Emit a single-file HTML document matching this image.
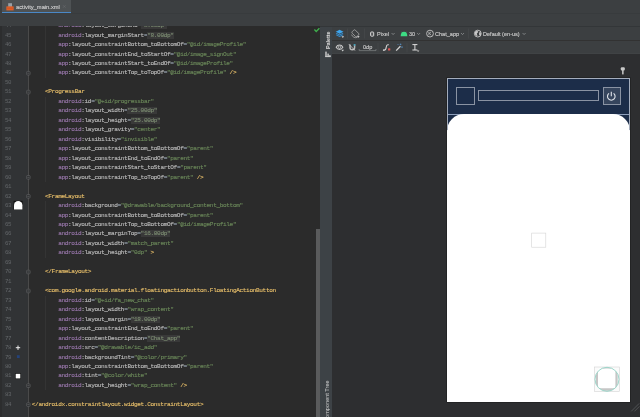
<!DOCTYPE html>
<html><head><meta charset="utf-8">
<style>
html,body{margin:0;padding:0;}
body{width:640px;height:417px;overflow:hidden;background:#2b2b2b;position:relative;font-family:"Liberation Sans",sans-serif;}
.abs{position:absolute;}
#topbar{left:0;top:0;width:640px;height:26px;background:#3c3f41;}
#tab{left:2px;top:0;width:69px;height:13px;background:#4e5254;}
#tabline{left:2px;top:11.7px;width:69px;height:1.6px;background:#4a88c7;}
#tabtxt{will-change:transform;left:16px;top:3px;font-size:5.77px;line-height:8px;color:#d6d6d6;-webkit-text-stroke:0.1px #d6d6d6;white-space:nowrap;}
#tabx{left:62px;top:2px;font-size:6px;line-height:8px;color:#7a7d7f;}
#editor{left:0;top:26px;width:320px;height:391px;background:#2b2b2b;overflow:hidden;}
#gutter{left:0;top:26px;width:28px;height:391px;background:#313335;}
#gutline{left:28.1px;top:26px;width:0.6px;height:391px;background:#4a4a4a;}
#code{will-change:transform;left:0;top:0;width:320px;height:417px;overflow:hidden;}
.ln{position:absolute;left:2.3px;width:9px;text-align:right;font-family:"Liberation Mono",monospace;font-size:5.8px;letter-spacing:-0.3px;line-height:9.47px;height:9.47px;color:#636669;white-space:pre;}
.cl{position:absolute;font-family:"Liberation Mono",monospace;font-size:6.1px;letter-spacing:-0.36px;-webkit-text-stroke:0.13px currentColor;line-height:9.47px;height:9.47px;white-space:pre;color:#a9b7c6;}
.ig{position:absolute;left:45.1px;width:0.6px;background:#343434;}
.ns{color:#9876aa}.at{color:#bababa}.eq{color:#a9b7c6}.v{color:#6a8759}.vh{color:#7a8a70;background:#393939}.tg{color:#e8bf6a}
#scroll{left:316px;top:229px;width:4px;height:188px;background:#5a5b5c;}
#strip{left:320px;top:26px;width:12px;height:391px;background:#3d4246;}
#tb{left:332px;top:26px;width:308px;height:28.2px;background:#3c3f41;}
#tbsep{left:332px;top:40.3px;width:308px;height:0.7px;background:#323232;}
#surface{left:332px;top:54.2px;width:308px;height:362.8px;background:#2d2e30;}
.tt{position:absolute;will-change:transform;font-size:5.55px;line-height:8px;color:#cdcdcd;-webkit-text-stroke:0.12px #cdcdcd;white-space:nowrap;}
.vt{position:absolute;font-size:5.6px;line-height:8px;color:#bbbbbb;white-space:nowrap;transform-origin:0 0;transform:rotate(-90deg);}
#phone{left:446.8px;top:78px;width:183.2px;height:324px;background:#1c2d49;box-sizing:border-box;box-shadow:0 0 0 0.6px #1e1e1f;}
#phoneborder{left:446.8px;top:78px;width:183.2px;height:52px;box-sizing:border-box;border:0.8px solid #a4adbd;border-bottom:none;}
#white{left:446.8px;top:114px;width:183.2px;height:288px;background:#ffffff;border-radius:17px 17px 0 0;}
#hline{left:447px;top:114px;width:183px;height:0.6px;background:#8fa0bc;}
.box{position:absolute;box-sizing:border-box;border:0.9px solid #8a93a3;}
</style></head><body>
<div id="editor" class="abs"></div>
<div id="gutter" class="abs"></div>
<div id="gutline" class="abs"></div>
<div class="abs" style="left:0;top:26px;width:2px;height:391px;background:#2c2d2e;"></div>
<div id="code" class="abs">
<div class="ln" style="top:21.09px">44</div>
<div class="cl" style="top:21.09px;left:58.20px"><span class="ns">android</span><span class="at">:layout_marginEnd</span><span class="eq">=</span><span class="vh">&quot;8.00dp&quot;</span></div>
<div class="ln" style="top:30.56px">45</div>
<div class="cl" style="top:30.56px;left:58.20px"><span class="ns">android</span><span class="at">:layout_marginStart</span><span class="eq">=</span><span class="vh">&quot;8.00dp&quot;</span></div>
<div class="ln" style="top:40.03px">46</div>
<div class="cl" style="top:40.03px;left:58.20px"><span class="ns">app</span><span class="at">:layout_constraintBottom_toBottomOf</span><span class="eq">=</span><span class="v">&quot;@id/imageProfile&quot;</span></div>
<div class="ln" style="top:49.50px">47</div>
<div class="cl" style="top:49.50px;left:58.20px"><span class="ns">app</span><span class="at">:layout_constraintEnd_toStartOf</span><span class="eq">=</span><span class="v">&quot;@id/image_signOut&quot;</span></div>
<div class="ln" style="top:58.98px">48</div>
<div class="cl" style="top:58.98px;left:58.20px"><span class="ns">app</span><span class="at">:layout_constraintStart_toEndOf</span><span class="eq">=</span><span class="v">&quot;@id/imageProfile&quot;</span></div>
<div class="ln" style="top:68.45px">49</div>
<div class="cl" style="top:68.45px;left:58.20px"><span class="ns">app</span><span class="at">:layout_constraintTop_toTopOf</span><span class="eq">=</span><span class="v">&quot;@id/imageProfile&quot;</span><span class="tg"> /&gt;</span></div>
<div class="ln" style="top:77.92px">50</div>
<div class="ln" style="top:87.39px">51</div>
<div class="cl" style="top:87.39px;left:45.00px"><span class="tg">&lt;ProgressBar</span></div>
<div class="ln" style="top:96.86px">52</div>
<div class="cl" style="top:96.86px;left:58.20px"><span class="ns">android</span><span class="at">:id</span><span class="eq">=</span><span class="v">&quot;@+id/progressbar&quot;</span></div>
<div class="ln" style="top:106.33px">53</div>
<div class="cl" style="top:106.33px;left:58.20px"><span class="ns">android</span><span class="at">:layout_width</span><span class="eq">=</span><span class="vh">&quot;25.00dp&quot;</span></div>
<div class="ln" style="top:115.80px">54</div>
<div class="cl" style="top:115.80px;left:58.20px"><span class="ns">android</span><span class="at">:layout_height</span><span class="eq">=</span><span class="vh">&quot;25.00dp&quot;</span></div>
<div class="ln" style="top:125.27px">55</div>
<div class="cl" style="top:125.27px;left:58.20px"><span class="ns">android</span><span class="at">:layout_gravity</span><span class="eq">=</span><span class="v">&quot;center&quot;</span></div>
<div class="ln" style="top:134.73px">56</div>
<div class="cl" style="top:134.73px;left:58.20px"><span class="ns">android</span><span class="at">:visibility</span><span class="eq">=</span><span class="v">&quot;invisible&quot;</span></div>
<div class="ln" style="top:144.20px">57</div>
<div class="cl" style="top:144.20px;left:58.20px"><span class="ns">app</span><span class="at">:layout_constraintBottom_toBottomOf</span><span class="eq">=</span><span class="v">&quot;parent&quot;</span></div>
<div class="ln" style="top:153.68px">58</div>
<div class="cl" style="top:153.68px;left:58.20px"><span class="ns">app</span><span class="at">:layout_constraintEnd_toEndOf</span><span class="eq">=</span><span class="v">&quot;parent&quot;</span></div>
<div class="ln" style="top:163.14px">59</div>
<div class="cl" style="top:163.14px;left:58.20px"><span class="ns">app</span><span class="at">:layout_constraintStart_toStartOf</span><span class="eq">=</span><span class="v">&quot;parent&quot;</span></div>
<div class="ln" style="top:172.62px">60</div>
<div class="cl" style="top:172.62px;left:58.20px"><span class="ns">app</span><span class="at">:layout_constraintTop_toTopOf</span><span class="eq">=</span><span class="v">&quot;parent&quot;</span><span class="tg"> /&gt;</span></div>
<div class="ln" style="top:182.08px">61</div>
<div class="ln" style="top:191.56px">62</div>
<div class="cl" style="top:191.56px;left:45.00px"><span class="tg">&lt;FrameLayout</span></div>
<div class="ln" style="top:201.02px">63</div>
<div class="cl" style="top:201.02px;left:58.20px"><span class="ns">android</span><span class="at">:background</span><span class="eq">=</span><span class="v">&quot;@drawable/background_content_bottom&quot;</span></div>
<div class="ln" style="top:210.50px">64</div>
<div class="cl" style="top:210.50px;left:58.20px"><span class="ns">app</span><span class="at">:layout_constraintBottom_toBottomOf</span><span class="eq">=</span><span class="v">&quot;parent&quot;</span></div>
<div class="ln" style="top:219.96px">65</div>
<div class="cl" style="top:219.96px;left:58.20px"><span class="ns">app</span><span class="at">:layout_constraintTop_toBottomOf</span><span class="eq">=</span><span class="v">&quot;@id/imageProfile&quot;</span></div>
<div class="ln" style="top:229.44px">66</div>
<div class="cl" style="top:229.44px;left:58.20px"><span class="ns">android</span><span class="at">:layout_marginTop</span><span class="eq">=</span><span class="vh">&quot;16.00dp&quot;</span></div>
<div class="ln" style="top:238.90px">67</div>
<div class="cl" style="top:238.90px;left:58.20px"><span class="ns">android</span><span class="at">:layout_width</span><span class="eq">=</span><span class="v">&quot;match_parent&quot;</span></div>
<div class="ln" style="top:248.38px">68</div>
<div class="cl" style="top:248.38px;left:58.20px"><span class="ns">android</span><span class="at">:layout_height</span><span class="eq">=</span><span class="v">&quot;0dp&quot;</span><span class="tg"> &gt;</span></div>
<div class="ln" style="top:257.85px">69</div>
<div class="ln" style="top:267.31px">70</div>
<div class="cl" style="top:267.31px;left:45.00px"><span class="tg">&lt;/FrameLayout&gt;</span></div>
<div class="ln" style="top:276.79px">71</div>
<div class="ln" style="top:286.25px">72</div>
<div class="cl" style="top:286.25px;left:45.00px"><span class="tg">&lt;com.google.android.material.floatingactionbutton.FloatingActionButton</span></div>
<div class="ln" style="top:295.73px">73</div>
<div class="cl" style="top:295.73px;left:58.20px"><span class="ns">android</span><span class="at">:id</span><span class="eq">=</span><span class="v">&quot;@+id/fa_new_chat&quot;</span></div>
<div class="ln" style="top:305.19px">74</div>
<div class="cl" style="top:305.19px;left:58.20px"><span class="ns">android</span><span class="at">:layout_width</span><span class="eq">=</span><span class="v">&quot;wrap_content&quot;</span></div>
<div class="ln" style="top:314.67px">75</div>
<div class="cl" style="top:314.67px;left:58.20px"><span class="ns">android</span><span class="at">:layout_margin</span><span class="eq">=</span><span class="vh">&quot;18.00dp&quot;</span></div>
<div class="ln" style="top:324.13px">76</div>
<div class="cl" style="top:324.13px;left:58.20px"><span class="ns">app</span><span class="at">:layout_constraintEnd_toEndOf</span><span class="eq">=</span><span class="v">&quot;parent&quot;</span></div>
<div class="ln" style="top:333.61px">77</div>
<div class="cl" style="top:333.61px;left:58.20px"><span class="ns">android</span><span class="at">:contentDescription</span><span class="eq">=</span><span class="vh">&quot;Chat_app&quot;</span></div>
<div class="ln" style="top:343.08px">78</div>
<div class="cl" style="top:343.08px;left:58.20px"><span class="ns">android</span><span class="at">:src</span><span class="eq">=</span><span class="v">&quot;@drawable/ic_add&quot;</span></div>
<div class="ln" style="top:352.55px">79</div>
<div class="cl" style="top:352.55px;left:58.20px"><span class="ns">android</span><span class="at">:backgroundTint</span><span class="eq">=</span><span class="v">&quot;@color/primary&quot;</span></div>
<div class="ln" style="top:362.02px">80</div>
<div class="cl" style="top:362.02px;left:58.20px"><span class="ns">app</span><span class="at">:layout_constraintBottom_toBottomOf</span><span class="eq">=</span><span class="v">&quot;parent&quot;</span></div>
<div class="ln" style="top:371.49px">81</div>
<div class="cl" style="top:371.49px;left:58.20px"><span class="ns">android</span><span class="at">:tint</span><span class="eq">=</span><span class="v">&quot;@color/white&quot;</span></div>
<div class="ln" style="top:380.96px">82</div>
<div class="cl" style="top:380.96px;left:58.20px"><span class="ns">android</span><span class="at">:layout_height</span><span class="eq">=</span><span class="v">&quot;wrap_content&quot;</span><span class="tg"> /&gt;</span></div>
<div class="ln" style="top:390.43px">83</div>
<div class="ln" style="top:399.90px">84</div>
<div class="cl" style="top:399.90px;left:31.80px"><span class="tg">&lt;/androidx.constraintlayout.widget.ConstraintLayout&gt;</span></div>
<div class="ig" style="top:21.09px;height:56.82px"></div>
<div class="ig" style="top:96.86px;height:85.23px"></div>
<div class="ig" style="top:201.02px;height:56.82px"></div>
<div class="ig" style="top:295.73px;height:94.70px"></div>
</div>
<div id="topbar" class="abs"></div>
<div id="tab" class="abs"></div>
<div id="tabline" class="abs"></div>
<div id="tabtxt" class="abs">activity_main.xml</div>

<div id="scroll" class="abs"></div>
<div id="strip" class="abs"></div>
<div id="tb" class="abs"></div>
<div id="tbsep" class="abs"></div>
<div class="abs" style="left:71px;top:13.1px;width:569px;height:0.6px;background:#383b3d;"></div>
<div class="abs" style="left:320px;top:25.8px;width:320px;height:0.7px;background:#333638;"></div>
<div class="abs" style="left:332px;top:53.2px;width:308px;height:1px;background:#404345;"></div>
<div id="surface" class="abs"></div>

<div id="phone" class="abs"></div>
<div id="hline" class="abs"></div>
<div id="white" class="abs"></div>
<div id="phoneborder" class="abs"></div>
<div class="box" style="left:456px;top:87.2px;width:18.6px;height:17.8px;"></div>
<div class="box" style="left:478.2px;top:90.3px;width:120.8px;height:10.8px;"></div>
<div class="box" style="left:603px;top:87.2px;width:18px;height:17.8px;background:#36455d;"></div>
<div class="vt" style="left:324.2px;top:49.3px;font-size:5.5px;color:#dcdcdc;font-weight:bold;letter-spacing:-0.1px;">Palette</div>
<div class="vt" style="left:323.4px;top:422px;font-size:5.6px;color:#d4d4d4;">Component Tree</div>
<div class="tt" style="left:377px;top:29.6px;">Pixel</div>
<div class="tt" style="left:409px;top:29.6px;">30</div>
<div class="tt" style="left:435px;top:29.6px;">Chat_app</div>
<div class="tt" style="left:483px;top:29.6px;">Default (en-us)</div>
<div class="tt" style="left:362.5px;top:43px;font-size:5.6px;">0dp</div>
<svg class="abs" style="left:0;top:0" width="640" height="417" viewBox="0 0 640 417">
<!-- check mark -->
<path d="M314.4 29.6 L316.2 31.4 L319.4 28.2" fill="none" stroke="#3fae4c" stroke-width="1.4"/>
<!-- palette icon -->
<g fill="#d0d0d0"><rect x="325.3" y="51.6" width="1.4" height="5.4"/><rect x="327.4" y="53.6" width="1.4" height="3.4"/><rect x="329.3" y="55" width="1.2" height="2"/><rect x="325.3" y="56.2" width="5.4" height="0.9"/></g>
<!-- separators row1 -->
<g stroke="#484b4d" stroke-width="0.6"><path d="M347.5 28.5V38.5M364.5 28.5V38.5M468.5 28.5V38.5M378 43V52.5M407 43V52.5"/></g>
<!-- layers icon -->
<path d="M339.6 29.7 L343.5 31.7 L339.6 33.7 L335.7 31.7Z" fill="#3ea6ee"/>
<path d="M336.7 32.9 L335.7 33.4 L339.6 35.4 L343.5 33.4 L342.5 32.9 L339.6 34.4Z" fill="#3592d6"/>
<path d="M336.7 34.5 L335.7 35 L339.6 37 L343.5 35 L342.5 34.5 L339.6 36Z" fill="#3592d6"/>
<path d="M341.5 36.2h2.6l-1.3 1.7z" fill="#d0d0d0"/>
<!-- orientation icon -->
<g fill="none" stroke="#a8a8a8" stroke-width="0.8"><rect x="353.2" y="29.9" width="4.4" height="6.8" rx="1.2" transform="rotate(-45 355.4 33.3)"/><path d="M351.6 34.6 A4.4 4.4 0 0 0 357.4 37.4"/></g>
<path d="M357 36h2.6l-1.3 2z" fill="#c4c4c4"/>
<!-- device icon -->
<rect x="370.6" y="32" width="3.1" height="4.2" rx="0.8" fill="#55585a" stroke="#d8d8d8" stroke-width="1"/>
<!-- chevrons -->
<g fill="none" stroke="#9a9c9e" stroke-width="0.7"><path d="M391.6 33l1.5 1.6l1.5-1.6"/><path d="M417.1 33l1.5 1.6l1.5-1.6"/><path d="M461 33l1.5 1.6l1.5-1.6"/><path d="M522.6 33l1.5 1.6l1.5-1.6"/></g>
<!-- android icon -->
<path d="M400.7 36.2 A3.3 4.4 0 0 1 407.3 36.2Z" fill="#3ddc84"/>
<path d="M401.8 31.8l0.8 1.2M406.1 31.8l-0.8 1.2" stroke="#3ddc84" stroke-width="0.5"/>
<!-- theme circle icon -->
<circle cx="430" cy="33.6" r="3.4" fill="none" stroke="#c4c4c4" stroke-width="0.9"/>
<path d="M428.9 31.9v3.4M429 33.7l2-1.8M429.6 33.3l1.5 2" stroke="#c4c4c4" stroke-width="0.7" fill="none"/>
<!-- globe -->
<circle cx="477.8" cy="33.6" r="3.4" fill="#3c3f41" stroke="#cacaca" stroke-width="0.9"/>
<path d="M475 32 c1-1.4 3-1.2 3.2-.2 c.2 1-1.4 1-1.4 2 c0 .8 .9 1 .5 2.2 c-1.8-.2-3.2-2.2-2.300-4z M479.600 31.800 c1.400.800 1.800 2.600.800 4 c-.9-.5-1.700-1.300-1.300-2.400 c.2-.6.3-1 .5-1.600z" fill="#cacaca"/>
<!-- eye icon -->
<path d="M336.2 47.2 C337.6 44.3 341.4 44.3 342.8 47.2 C341.4 50.1 337.6 50.1 336.2 47.2Z" fill="none" stroke="#c8c8c8" stroke-width="1.1"/>
<circle cx="339.5" cy="47.2" r="1.2" fill="none" stroke="#c0c0c0" stroke-width="0.8"/>
<path d="M341.4 49.7h2.6l-1.3 1.7z" fill="#d0d0d0"/>
<!-- magnet icon -->
<path d="M350 44.6 v2.8 a2.3 2.3 0 0 0 4.6 0 v-2.8" fill="none" stroke="#b8b8b8" stroke-width="1.5"/>
<rect x="353.7" y="44" width="1.7" height="1.7" fill="#3f9fb8"/>
<path d="M348.9 44.2 L355 50.6" stroke="#d0d0d0" stroke-width="0.8"/>
<!-- 0dp bracket -->
<path d="M359.2 49v1.6h16.8v-1.6" fill="none" stroke="#8c8e90" stroke-width="0.6"/>
<!-- path icon -->
<path d="M383.6 50 h0.8 c2.8 0 0.8-5.2 3.4-5.2 h1" fill="none" stroke="#d4d4d4" stroke-width="1.1"/>
<circle cx="383.8" cy="50.2" r="0.9" fill="#c0c0c0"/>
<rect x="388" y="48.3" width="2.3" height="2.3" rx="0.5" fill="#e05555"/>
<!-- wand icon -->
<path d="M396.2 50.6 L400.4 46.2" stroke="#d4d4d4" stroke-width="1.3"/>
<path d="M400.6 43.6v1.6M399.8 44.4h1.6M402 46.4v1.4M401.3 47.1h1.4M398 44v1" stroke="#5a9bd6" stroke-width="0.6"/>
<!-- I-beam icon -->
<path d="M412.4 44.6h5M414.9 44.6v5.4M412.4 50h5" stroke="#dcdcdc" stroke-width="1" fill="none"/>
<path d="M416.8 50.4h2.6l-1.3 1.5z" fill="#d0d0d0"/>
<!-- xml file icon in tab -->
<rect x="8.2" y="3.2" width="3.8" height="3.6" fill="#9aa0a6"/>
<rect x="6.4" y="6.4" width="7.2" height="4" fill="#e8622a"/>
<path d="M8 7.4v2M10 7.4v2M12 7.4v2" stroke="#9a3a10" stroke-width="0.5"/>
<!-- tab close -->
<path d="M63 5.2l2.6 2.6M65.6 5.2l-2.6 2.6" stroke="#6e7174" stroke-width="0.5"/>
<!-- pin icon -->
<g fill="#c8c8c8"><rect x="620.8" y="67.2" width="4" height="3.4" rx="1"/><rect x="622.1" y="70" width="1.5" height="4.4"/></g>
<!-- power icon -->
<path d="M609 93.4 a3.8 3.8 0 1 0 4.6 0" fill="none" stroke="#e2e6ec" stroke-width="1.1"/>
<path d="M611.3 91.8v4.4" stroke="#e2e6ec" stroke-width="1.1"/>
<!-- progress placeholder -->
<rect x="531.7" y="233.1" width="14.1" height="14.1" fill="#ffffff" stroke="#d4d4d4" stroke-width="0.6"/>
<!-- FAB -->
<rect x="594.4" y="367" width="25.2" height="24.6" fill="#fbfbfb" stroke="#d4d4d4" stroke-width="0.6"/>
<clipPath id="fc"><circle cx="607" cy="379.3" r="11.8"/></clipPath>
<rect x="596" y="367.2" width="21.6" height="23.6" rx="1" fill="#c6c6c6" clip-path="url(#fc)"/>
<rect x="598" y="368.6" width="17.4" height="19.6" rx="1.5" fill="#ffffff"/>
<circle cx="607" cy="379.3" r="12" fill="none" stroke="#93d2c5" stroke-width="0.9"/>
<!-- resize handle -->
<path d="M631.2 411.4l8-8M634.4 411.4l5-5" stroke="#6a6c6e" stroke-width="0.6"/>
<!-- fold markers in gutter -->
<g fill="#2e2f31" stroke="#6c6e70" stroke-width="0.5"><rect x="26.6" y="71.4" width="3.6" height="3.6" rx="0.8"/><rect x="26.6" y="90.3" width="3.6" height="3.6" rx="0.8"/><rect x="26.6" y="175.5" width="3.6" height="3.6" rx="0.8"/><rect x="26.6" y="194.5" width="3.6" height="3.6" rx="0.8"/><rect x="26.6" y="270.2" width="3.6" height="3.6" rx="0.8"/><rect x="26.6" y="289.2" width="3.6" height="3.6" rx="0.8"/><rect x="26.6" y="383.9" width="3.6" height="3.6" rx="0.8"/><rect x="26.6" y="402.8" width="3.6" height="3.6" rx="0.8"/></g>
<path d="M27.4 73.2h2M27.4 92.1h2M27.4 177.3h2M27.4 196.3h2M27.4 272.0h2M27.4 291.0h2M27.4 385.7h2M27.4 404.6h2" stroke="#7a7c7e" stroke-width="0.5"/>
<!-- gutter icons -->
<rect x="13.6" y="200.8" width="9" height="9" fill="#111111"/><path d="M14 209.6 v-4.4 a4.2 4.2 0 0 1 8.4 0 v4.4z" fill="#ffffff"/>
<path d="M15.8 347.7h4.4M18 345.5v4.4" stroke="#f0f0f0" stroke-width="1"/>
<rect x="16.9" y="355.2" width="2.8" height="2.8" fill="#24427a"/>
<rect x="15.3" y="373.6" width="5.4" height="5.2" fill="#ffffff" stroke="#151515" stroke-width="0.6"/>
</svg>

</body></html>
